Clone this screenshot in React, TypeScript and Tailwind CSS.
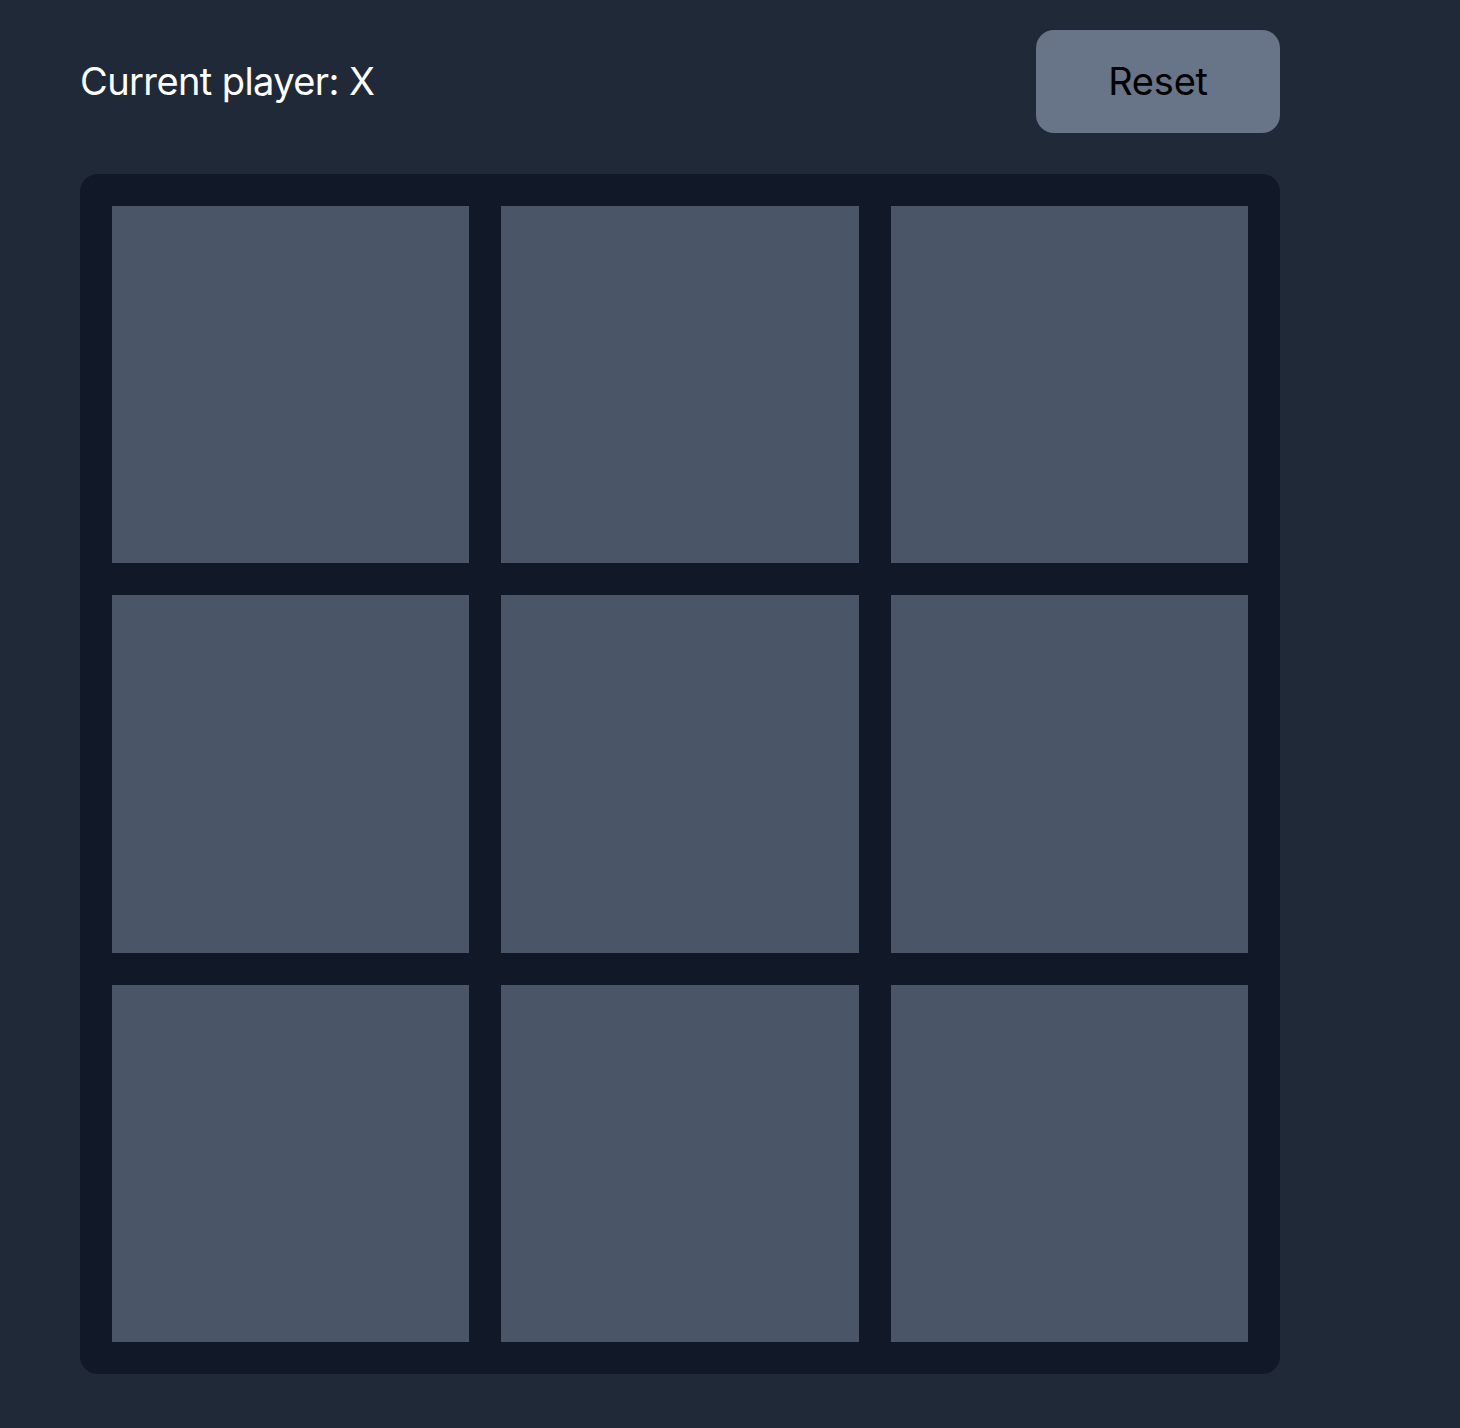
import React, { useState } from "react";

type Cell = "X" | "O" | null;

const App: React.FC = () => {
  const [cells, setCells] = useState<Cell[]>(Array(9).fill(null));
  const [player, setPlayer] = useState<"X" | "O">("X");

  const play = (i: number) => {
    if (cells[i]) return;
    const next = [...cells];
    next[i] = player;
    setCells(next);
    setPlayer(player === "X" ? "O" : "X");
  };

  const reset = () => {
    setCells(Array(9).fill(null));
    setPlayer("X");
  };

  return (
    <div
      className="min-h-screen bg-[#1f2937] px-[80px] pt-[30px]"
      style={{ fontFamily: "Inter, 'Noto Sans', sans-serif" }}
    >
      <div className="flex w-[1200px] items-center justify-between">
        <p className="text-[38px] tracking-[-0.6px] text-white">
          Current player: {player}
        </p>
        <button
          onClick={reset}
          className="h-[103px] w-[244px] rounded-[18px] bg-[#687487] text-[38px] tracking-[-0.2px] text-black"
        >
          Reset
        </button>
      </div>
      <div className="mt-[41px] grid h-[1200px] w-[1200px] grid-cols-3 gap-8 rounded-[18px] bg-[#111827] p-8">
        {cells.map((c, i) => (
          <button
            key={i}
            onClick={() => play(i)}
            className="flex items-center justify-center bg-[#4a5568] text-[120px] text-white"
          >
            {c}
          </button>
        ))}
      </div>
    </div>
  );
};

export default App;
